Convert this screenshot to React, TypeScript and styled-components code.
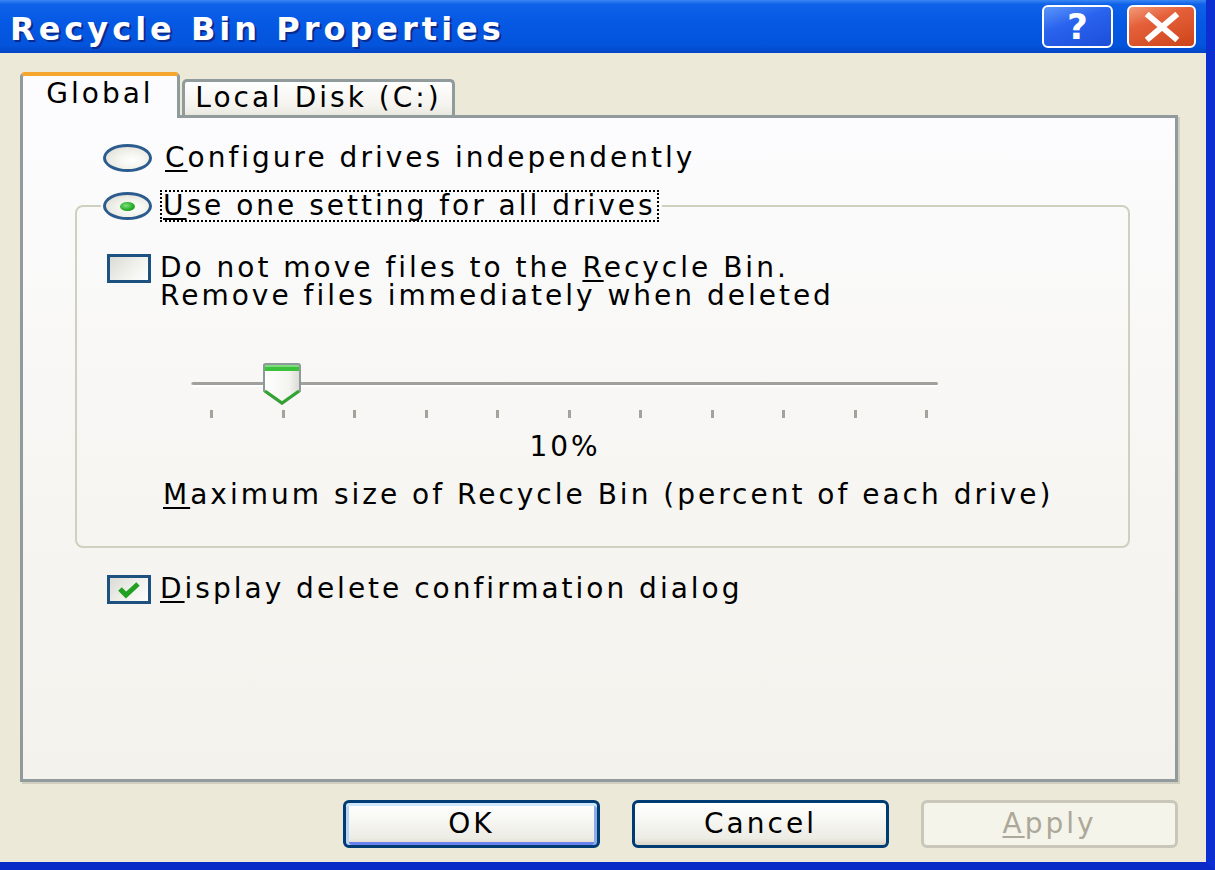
import React from "react";
import styled, { createGlobalStyle } from "styled-components";

const GlobalStyle = createGlobalStyle`
  html, body { margin: 0; padding: 0; background: #ECE9D8; }
  body { font-family: "DejaVu Sans", Verdana, sans-serif; }
`;

const Window = styled.div`
  width: 1215px;
  height: 870px;
  box-sizing: border-box;
  background: #ECE9D8;
  border-right: 9px solid #0B2FD0;
  border-bottom: 8px solid #0A2AC8;
  display: flex;
  flex-direction: column;
  overflow: hidden;
  font-family: "DejaVu Sans", Verdana, sans-serif;
  font-size: 28px;
  letter-spacing: 3px;
  color: #000;
`;

const TitleBar = styled.div`
  height: 53px;
  flex: none;
  display: flex;
  align-items: center;
  padding-left: 10px;
  padding-right: 10px;
  background: linear-gradient(180deg, #3A86F4 0%, #0F62E8 8%, #0559E4 40%, #0454DC 85%, #0345C6 100%);
`;

const Title = styled.div`
  flex: 1;
  color: #fff;
  font-weight: bold;
  font-size: 32px;
  letter-spacing: 4px;
  text-shadow: 2px 2px 0 #0B2A8C;
  padding-top: 4px;
`;

const CaptionButton = styled.div<{ $kind: "help" | "close" }>`
  width: ${(p) => (p.$kind === "help" ? 71 : 69)}px;
  height: 43px;
  box-sizing: border-box;
  margin-left: ${(p) => (p.$kind === "help" ? 0 : 14)}px;
  border: 2px solid #fff;
  border-radius: 6px;
  display: flex;
  align-items: center;
  justify-content: center;
  background: ${(p) =>
    p.$kind === "help"
      ? "linear-gradient(160deg, #5B96FA 0%, #2A63EE 40%, #1B4ED9 100%)"
      : "linear-gradient(160deg, #F29B7A 0%, #E5603A 35%, #CC4418 100%)"};
  color: #fff;
  font-weight: bold;
  font-size: 36px;
  letter-spacing: 0;
  line-height: 1;
`;

const Body = styled.div`
  flex: 1;
  display: flex;
  flex-direction: column;
  padding: 19px 28px 0 20px;
`;

const TabStrip = styled.div`
  display: flex;
  align-items: flex-end;
  height: 43px;
  position: relative;
  z-index: 1;
`;

const Tab = styled.div<{ $active?: boolean }>`
  box-sizing: border-box;
  width: ${(p) => (p.$active ? 160 : 273)}px;
  height: ${(p) => (p.$active ? 46 : 36)}px;
  margin-bottom: ${(p) => (p.$active ? -3 : 0)}px;
  margin-left: ${(p) => (p.$active ? 0 : 2)}px;
  border: 3px solid #919B9C;
  border-bottom: none;
  border-top: ${(p) => (p.$active ? "4px solid #F4A62F" : "3px solid #919B9C")};
  border-radius: 5px 5px 0 0;
  background: ${(p) =>
    p.$active ? "#FCFCFE" : "linear-gradient(180deg, #FFFFFF 0%, #F4F3EE 70%, #E9E8E0 100%)"};
  display: flex;
  justify-content: center;
  padding-top: ${(p) => (p.$active ? 4 : 2)}px;
  line-height: 28px;
`;

const Panel = styled.div`
  box-sizing: border-box;
  height: 667px;
  border: 3px solid #919B9C;
  box-shadow: 2px 2px 0 #D0CEBF;
  background: linear-gradient(180deg, #FCFCFE 0%, #F6F5F1 60%, #F3F2ED 100%);
  display: flex;
  flex-direction: column;
  align-items: flex-start;
`;

const OptionRow = styled.div<{ $indent: number; $top: number }>`
  display: flex;
  align-items: center;
  height: 32px;
  margin-left: ${(p) => p.$indent}px;
  margin-top: ${(p) => p.$top}px;
`;

const Radio = styled.span<{ $checked?: boolean }>`
  box-sizing: border-box;
  width: 49px;
  height: 28px;
  flex: none;
  border: 3px solid #2C5B8E;
  border-radius: 50%;
  background: radial-gradient(ellipse at 60% 60%, #FFFFFF 0%, #F0F0EA 50%, #D8D6CC 100%);
  display: flex;
  align-items: center;
  justify-content: center;
  margin-right: 8px;
  &::after {
    content: "";
    display: ${(p) => (p.$checked ? "block" : "none")};
    width: 15px;
    height: 9px;
    border-radius: 50%;
    background: radial-gradient(ellipse at 40% 40%, #7FE07F 0%, #21A921 60%, #138A13 100%);
  }
`;

const Label = styled.span<{ $focus?: boolean }>`
  line-height: 28px;
  white-space: nowrap;
  padding: 0 ${(p) => (p.$focus ? 1 : 3)}px;
  border: ${(p) => (p.$focus ? "2px dotted #000" : "2px solid transparent")};
`;

const Key = styled.u`
  text-decoration-thickness: 2px;
  text-underline-offset: 3px;
`;

const Group = styled.fieldset`
  box-sizing: border-box;
  width: 1055px;
  margin: 16px 0 0 52px;
  padding: 0 0 37px 0;
  border: 2px solid #D0D0BF;
  border-radius: 8px;
  display: flex;
  flex-direction: column;
  align-items: flex-start;
`;

const Legend = styled.legend`
  margin-left: 24px;
  padding: 0 3px 0 2px;
  display: flex;
  align-items: center;
  height: 32px;
`;

const CheckRow = styled.div<{ $indent: number; $top: number }>`
  display: flex;
  align-items: flex-start;
  margin-left: ${(p) => p.$indent}px;
  margin-top: ${(p) => p.$top}px;
`;

const Box = styled.span`
  box-sizing: border-box;
  width: 44px;
  height: 29px;
  flex: none;
  border: 3px solid #1C5180;
  background: linear-gradient(135deg, #DCDCD6 0%, #F2F2EE 60%, #FFFFFF 100%);
  display: flex;
  align-items: center;
  justify-content: center;
  margin-right: 9px;
`;

const Text = styled.div`
  line-height: 28px;
  white-space: nowrap;
`;

const Slider = styled.div`
  position: relative;
  width: 746px;
  height: 46px;
  margin: 50px 0 0 115px;
  display: flex;
  align-items: center;
`;

const Track = styled.div`
  flex: 1;
  height: 3px;
  border-radius: 2px;
  background: #A2A19C;
  box-shadow: 0 2px 0 #FFFFFF, -1px 0 0 #C8C7C0;
`;

const Thumb = styled.svg`
  position: absolute;
  left: 70px;
  top: 3px;
`;

const Ticks = styled.div`
  width: 718px;
  margin: 4px 0 0 133px;
  display: flex;
  justify-content: space-between;
`;

const Tick = styled.span`
  width: 3px;
  height: 8px;
  background: #A3A39C;
`;

const Percent = styled.div`
  width: 746px;
  margin: 15px 0 0 115px;
  text-align: center;
  line-height: 28px;
`;

const Caption = styled.div`
  margin: 20px 0 0 86px;
  line-height: 28px;
  white-space: nowrap;
`;

const ButtonRow = styled.div`
  display: flex;
  justify-content: flex-end;
  gap: 32px;
  margin-top: 18px;
`;

const Button = styled.div<{ $variant: "default" | "normal" | "disabled" }>`
  box-sizing: border-box;
  width: 257px;
  height: 48px;
  border-radius: 6px;
  border: 3px solid ${(p) => (p.$variant === "disabled" ? "#C9C7BA" : "#003C74")};
  background: ${(p) =>
    p.$variant === "disabled"
      ? "#F5F4EA"
      : "linear-gradient(180deg, #FFFFFF 0%, #F7F7F3 40%, #ECEBE4 85%, #D8D5C8 100%)"};
  box-shadow: ${(p) =>
    p.$variant === "default"
      ? "inset 0 3px 0 #CEE7FF, inset 3px 0 0 #BCD4F6, inset -3px 0 0 #89ADE4, inset 0 -3px 0 #6982EE"
      : "none"};
  color: ${(p) => (p.$variant === "disabled" ? "#ACA899" : "#000")};
  display: flex;
  align-items: center;
  justify-content: center;
  line-height: 28px;
`;

const ticks = Array.from({ length: 11 }, (_, i) => i);

export default function App() {
  return (
    <>
      <GlobalStyle />
      <Window>
        <TitleBar>
          <Title>Recycle Bin Properties</Title>
          <CaptionButton $kind="help">?</CaptionButton>
          <CaptionButton $kind="close">
            <svg width="40" height="30" viewBox="0 0 40 30">
              <path d="M7 4 L33 26 M33 4 L7 26" stroke="#fff" strokeWidth="6" strokeLinecap="square" />
            </svg>
          </CaptionButton>
        </TitleBar>
        <Body>
          <TabStrip>
            <Tab $active>Global</Tab>
            <Tab>Local Disk (C:)</Tab>
          </TabStrip>
          <Panel>
            <OptionRow $indent={80} $top={24}>
              <Radio />
              <Label>
                <Key>C</Key>onfigure drives independently
              </Label>
            </OptionRow>
            <Group>
              <Legend>
                <Radio $checked />
                <Label $focus>
                  <Key>U</Key>se one setting for all drives
                </Label>
              </Legend>
              <CheckRow $indent={30} $top={32}>
                <Box />
                <Text>
                  Do not move files to the <Key>R</Key>ecycle Bin.
                  <br />
                  Remove files immediately when deleted
                </Text>
              </CheckRow>
              <Slider>
                <Track />
                <Thumb width="40" height="42" viewBox="0 0 40 42">
                  <defs>
                    <linearGradient id="tg" x1="0" y1="0" x2="1" y2="0">
                      <stop offset="0" stopColor="#FFFFFF" />
                      <stop offset="0.7" stopColor="#F3F3EF" />
                      <stop offset="1" stopColor="#DAD9D2" />
                    </linearGradient>
                  </defs>
                  <path d="M2 2 Q2 1 4 1 L36 1 Q38 1 38 3 L38 28 L20 41 L2 28 Z" fill="url(#tg)" stroke="#8C9A9A" strokeWidth="2" />
                  <rect x="3" y="2" width="34" height="6" fill="#3CC13C" />
                  <rect x="3" y="2" width="34" height="2" fill="#7EDC7E" />
                  <path d="M3 28 L20 40 L37 28" fill="none" stroke="#2FA52F" strokeWidth="3" />
                </Thumb>
              </Slider>
              <Ticks>
                {ticks.map((t) => (
                  <Tick key={t} />
                ))}
              </Ticks>
              <Percent>10%</Percent>
              <Caption>
                <Key>M</Key>aximum size of Recycle Bin (percent of each drive)
              </Caption>
            </Group>
            <CheckRow $indent={84} $top={27}>
              <Box>
                <svg width="26" height="20" viewBox="0 0 26 20">
                  <path d="M4 9 L10 15 L22 4" fill="none" stroke="#21A121" strokeWidth="5" />
                </svg>
              </Box>
              <Text>
                <Key>D</Key>isplay delete confirmation dialog
              </Text>
            </CheckRow>
          </Panel>
          <ButtonRow>
            <Button $variant="default">OK</Button>
            <Button $variant="normal">Cancel</Button>
            <Button $variant="disabled">
              <span>
                <Key>A</Key>pply
              </span>
            </Button>
          </ButtonRow>
        </Body>
      </Window>
    </>
  );
}
